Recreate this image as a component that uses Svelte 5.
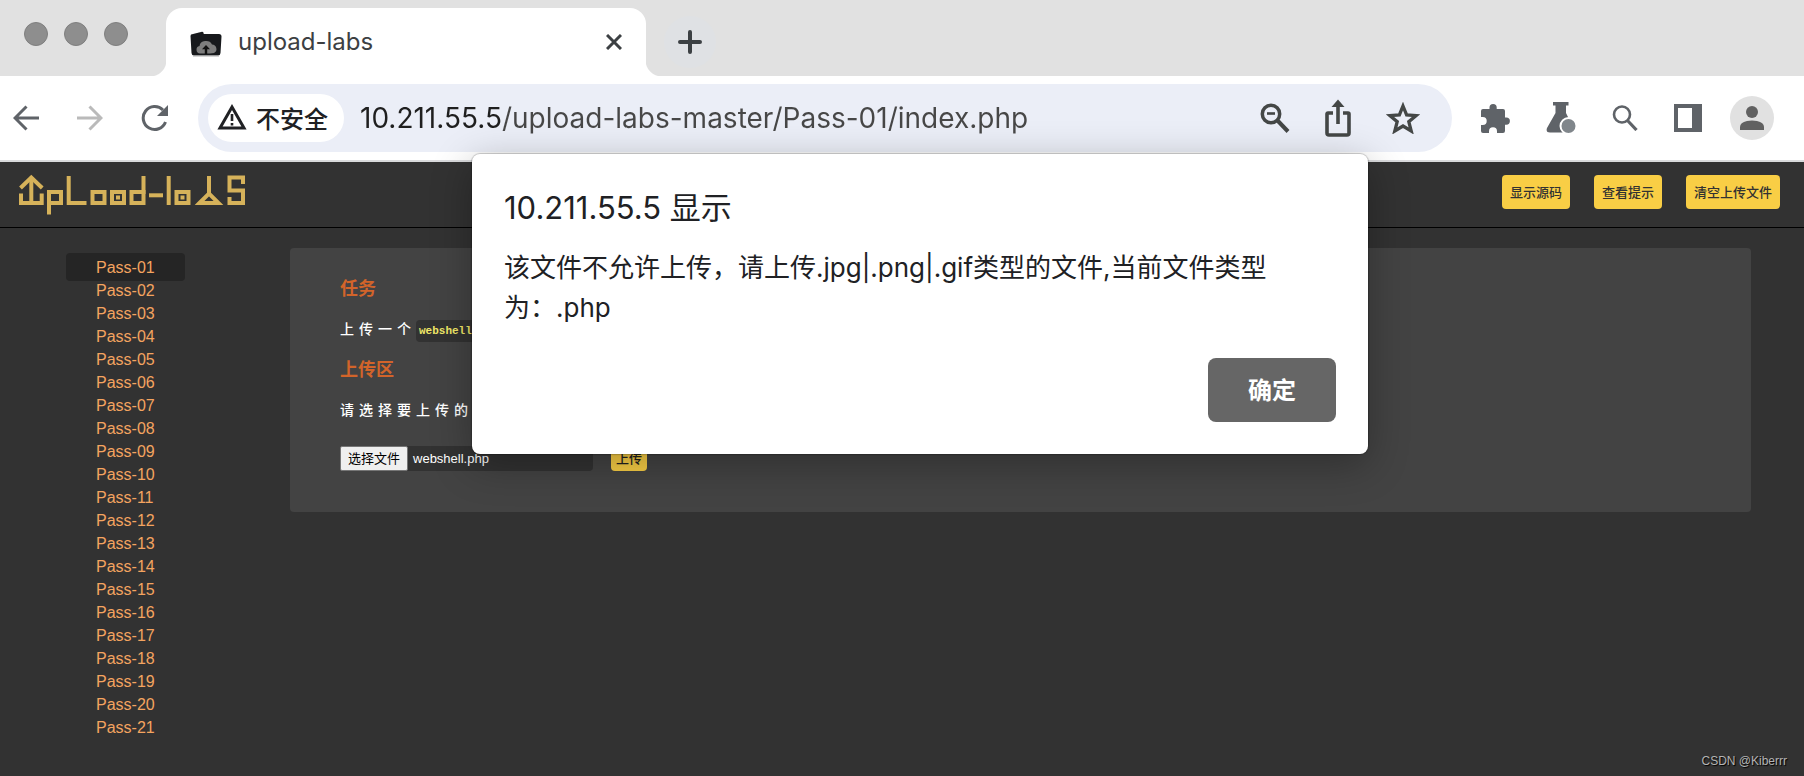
<script lang="ts">
  const host = '10.211.55.5';
  const passes = Array.from({ length: 21 }, (_, i) => `Pass-${String(i + 1).padStart(2, '0')}`);
  const actions = ['显示源码', '查看提示', '清空上传文件'];

  let url = $state(`${host}/upload-labs-master/Pass-01/index.php`);
  let active = $state('Pass-01');
  let fileName = $state('webshell.php');
  let alertOpen = $state(true);

  function pickFile(e: Event) {
    const input = e.target as HTMLInputElement;
    if (input.files?.length) fileName = input.files[0].name;
  }
</script>

<div class="window">
  <div class="tab-strip">
    <div class="lights"><span></span><span></span><span></span></div>
    <div class="tab">
      <svg class="favicon" width="32" height="26" viewBox="0 0 32 26">
        <path d="M1 3.5 12 .8q1.500-.3 1.800 2.200H29q2.500 0 2.500 2.500L30.500 22q-.2 2.500-2.500 2.500H4q-2.300 0-2.500-2.500L.5 5Z" fill="#17191c" />
        <path d="M3 25h26" stroke="#aaa" />
        <path d="M12 22.500H10a3.800 3.800 0 0 1-.5-7.500 6.500 5.500 0 0 1 12.500-1.500 4.500 4.500 0 0 1 2 8.500l-4 .5Z" fill="#7d7d7d" />
        <path d="m16 14 4 4.200h-2.800V23h-2.400v-4.800H12Z" fill="#111" />
      </svg>
      <span class="tab-title">upload-labs</span>
      <button class="icon" aria-label="关闭标签页">
        <svg width="16" height="16" viewBox="0 0 16 16"><path d="m1 1 14 14M15 1 1 15" stroke="#3c4043" stroke-width="3" /></svg>
      </button>
    </div>
    <button class="icon new-tab" aria-label="新标签页">
      <svg width="24" height="24" viewBox="0 0 24 24"><path d="M12 2v20M2 12h20" stroke="#3c4043" stroke-width="4" stroke-linecap="round" /></svg>
    </button>
  </div>

  <div class="toolbar">
    <div class="nav">
      <button class="icon" aria-label="后退">
        <svg width="26" height="26" viewBox="0 0 26 26" fill="none" stroke="#5f6368" stroke-width="3"><path d="M26 13H2M13.500 1.500 2 13l11.500 11.500" /></svg>
      </button>
      <button class="icon" aria-label="前进">
        <svg width="26" height="26" viewBox="0 0 26 26" fill="none" stroke="#bababa" stroke-width="3"><path d="M0 13h24M12.500 1.500 24 13 12.500 24.500" /></svg>
      </button>
      <button class="icon" aria-label="重新加载">
        <svg width="28" height="28" viewBox="0 0 28 28">
          <path d="M24.500 18A11.500 11.500 0 1 1 22 6" fill="none" stroke="#5f6368" stroke-width="3" />
          <path d="M27 1v11H16Z" fill="#5f6368" />
        </svg>
      </button>
    </div>

    <div class="address">
      <button class="chip">
        <svg width="30" height="26" viewBox="0 0 30 26">
          <path d="M15 3 27 24H3Z" fill="none" stroke="#202124" stroke-width="3" />
          <path d="M15 10v7M15 19v2.500" stroke="#202124" stroke-width="2.600" />
        </svg>
        不安全
      </button>
      <input class="url" type="text" aria-label="地址" bind:value={url} />
      <div class="address-icons">
        <button class="icon" aria-label="缩放">
          <svg width="30" height="30" viewBox="0 0 30 30" fill="none" stroke="#444746" stroke-width="3.500">
            <circle cx="11" cy="11" r="8.700" /><path d="m17.500 17.500 10.500 11" stroke-width="4" /><path d="M7 10.500h8" stroke-width="2.600" />
          </svg>
        </button>
        <button class="icon" aria-label="分享">
          <svg width="26" height="38" viewBox="0 0 26 38" fill="none" stroke="#444746" stroke-width="3.600">
            <path d="M8 14H3q-1 0-1 1v19q0 2 2 2h18q2 0 2-2V15q0-1-1-1h-5M13 25V4" /><path d="m13 .5 6.500 7.500h-13Z" fill="#444746" stroke="none" />
          </svg>
        </button>
        <button class="icon" aria-label="收藏">
          <svg width="34" height="32" viewBox="0 0 34 32">
            <path d="m17 4 3.600 8.900 9.600.7-7.400 6.100 2.400 9.300L17 24l-8.200 5 2.400-9.300-7.400-6.100 9.600-.7Z" fill="none" stroke="#444746" stroke-width="3.300" />
          </svg>
        </button>
      </div>
    </div>

    <div class="extensions">
      <button class="icon" aria-label="扩展程序">
        <svg width="30" height="30" viewBox="0 0 30 30">
          <path d="M3 6h6.500V4.500a3.600 3.600 0 0 1 7.200 0V6H23q2 0 2 2v6.500h1.300a3.600 3.600 0 0 1 0 7.200H25V28q0 2-2 2h-6v-1.700a4 4 0 0 0-8 0V30H3q-2 0-2-2v-6h1.700a4 4 0 0 0 0-8H1V8q0-2 2-2Z" fill="#5f6368" />
        </svg>
      </button>
      <button class="icon" aria-label="实验">
        <svg width="30" height="32" viewBox="0 0 30 32">
          <path d="M7 0h15.500v3.500H20V11l7 14q2 5.500-2 5.500H4Q-.5 30.500 1 26l8.500-15V3.500H7Z" fill="#5f6368" />
          <circle cx="22.500" cy="24" r="8" fill="#80868b" stroke="#fff" stroke-width="2" />
        </svg>
      </button>
      <button class="icon" aria-label="搜索">
        <svg width="26" height="26" viewBox="0 0 26 26" fill="none" stroke="#5f6368" stroke-width="2.600">
          <circle cx="10" cy="9.500" r="8" /><path d="m15.500 15.500 9 9.500" stroke-width="3.200" />
        </svg>
      </button>
      <button class="icon" aria-label="侧边栏">
        <svg width="28" height="28" viewBox="0 0 28 28"><path d="M0 0h28v28H0ZM4 4v20h14V4Z" fill="#5f6368" fill-rule="evenodd" /></svg>
      </button>
      <button class="icon avatar" aria-label="用户">
        <svg width="44" height="44" viewBox="0 0 44 44">
          <circle cx="22" cy="22" r="22" fill="#e1e1e1" />
          <circle cx="22" cy="16" r="6" fill="#616161" />
          <path d="M10 34v-3q0-4.500 7-6 5-1 10 0 7 1.500 7 6v3Z" fill="#616161" />
        </svg>
      </button>
    </div>
  </div>

  <div class="page">
    <header>
      <svg class="logo" width="230" height="42" viewBox="0 0 230 42" role="img" aria-label="upload-labs">
        <g fill="none" stroke="#d6b25a" stroke-width="4">
          <polyline points="2.500,14 13.300,3.500 24.200,14" />
          <line x1="13.300" y1="3" x2="13.300" y2="29" />
          <polyline points="3,19.500 3,29 23.700,29 23.700,19.500" />
          <rect x="31" y="18" width="12" height="11" />
          <line x1="31" y1="18" x2="31" y2="40.500" />
          <polyline points="50.700,2 50.700,29 68.500,29" />
          <rect x="74.500" y="18" width="12" height="11" />
          <rect x="94" y="18" width="12" height="11" />
          <rect x="113.500" y="18" width="12" height="11" />
          <line x1="125.500" y1="2" x2="125.500" y2="20" />
          <line x1="131" y1="21.300" x2="145" y2="21.300" />
          <line x1="150.700" y1="2" x2="150.700" y2="31" />
          <rect x="158.500" y="18" width="12" height="11" />
          <line x1="191" y1="2" x2="191" y2="19" />
          <polygon points="181.500,29 191,19.500 200.500,29" />
          <polyline points="225,10 225,3.500 211.500,3.500 211.500,16.500 225,16.500 225,29 211.500,29 211.500,23" />
        </g>
        <g fill="#d6b25a">
          <rect x="98" y="21.500" width="4" height="4" />
          <rect x="162.500" y="21.500" width="4" height="4" />
        </g>
      </svg>
      <div class="actions">
        {#each actions as action}
          <button class="yellow">{action}</button>
        {/each}
      </div>
    </header>

    <div class="content">
      <nav>
        <ul>
          {#each passes as pass}
            <li><a href="#{pass}" class:active={pass === active} onclick={() => (active = pass)}>{pass}</a></li>
          {/each}
        </ul>
      </nav>

      <main>
        <h3>任务</h3>
        <p>上传一个<code>webshell</code></p>
        <h3>上传区</h3>
        <p>请选择要上传的</p>
        <form onsubmit={(e) => e.preventDefault()}>
          <label class="file">
            <input type="file" onchange={pickFile} />
            <span class="choose">选择文件</span>
            <span class="file-name">{fileName}</span>
          </label>
          <button class="yellow upload">上传</button>
        </form>
      </main>
    </div>

    <footer>CSDN @Kiberrr</footer>
  </div>

  {#if alertOpen}
    <div class="alert" role="alertdialog" aria-labelledby="alert-title" aria-describedby="alert-text">
      <h2 id="alert-title">{host} 显示</h2>
      <p id="alert-text">该文件不允许上传，请上传.jpg|.png|.gif类型的文件,当前文件类型为：.php</p>
      <div class="alert-buttons">
        <button onclick={() => (alertOpen = false)}>确定</button>
      </div>
    </div>
  {/if}
</div>

<style>
  :global(body) {
    margin: 0;
    background: #323232;
  }
  .window {
    position: relative;
    display: flex;
    flex-direction: column;
    min-height: 100vh;
    font-family: Inter, 'Noto Sans CJK SC', sans-serif;
  }
  button {
    font-family: inherit;
    border: none;
    cursor: pointer;
  }
  .icon {
    display: flex;
    flex: none;
    padding: 0;
    background: none;
  }

  /* browser chrome */
  .tab-strip {
    display: flex;
    align-items: flex-end;
    height: 76px;
    background: #e1e1e1;
  }
  .lights {
    display: flex;
    gap: 16px;
    align-self: flex-start;
    padding: 22px 38px 0 24px;
  }
  .lights span {
    box-sizing: border-box;
    width: 24px;
    height: 24px;
    border: 1px solid #7f7f7f;
    border-radius: 50%;
    background: #8e8e8e;
  }
  .tab {
    position: relative;
    display: flex;
    align-items: center;
    box-sizing: border-box;
    width: 480px;
    height: 68px;
    padding: 0 24px;
    border-radius: 16px 16px 0 0;
    background: #fff;
  }
  /* inverted corners where the tab meets the toolbar */
  .tab::before,
  .tab::after {
    content: '';
    position: absolute;
    bottom: 0;
    width: 16px;
    height: 16px;
  }
  .tab::before {
    right: 100%;
    background: radial-gradient(circle at 0 0, #e1e1e1 16px, #fff 17px);
  }
  .tab::after {
    left: 100%;
    background: radial-gradient(circle at 100% 0, #e1e1e1 16px, #fff 17px);
  }
  .favicon {
    margin-top: 4px;
  }
  .tab-title {
    flex: 1;
    margin-left: 16px;
    color: #3c4043;
    font-size: 24px;
    line-height: 32px;
  }
  .new-tab {
    align-items: center;
    justify-content: center;
    width: 52px;
    height: 52px;
    margin: 0 0 8px 18px;
    border-radius: 50%;
    background: #dfe1e4;
  }
  .toolbar {
    display: flex;
    align-items: center;
    padding: 8px 30px 8px 13px;
    border-bottom: 2px solid #d9dadc;
    background: #fff;
  }
  .nav {
    display: flex;
    align-items: center;
    gap: 38px;
    margin-right: 29px;
  }
  .address {
    display: flex;
    flex: 1;
    align-items: center;
    box-sizing: border-box;
    min-width: 0;
    height: 68px;
    padding: 0 32px 0 10px;
    border-radius: 34px;
    background: #ebeef7;
  }
  .chip {
    display: flex;
    align-items: center;
    gap: 9px;
    box-sizing: border-box;
    height: 48px;
    padding: 0 16px 2px 9px;
    border-radius: 24px;
    background: #fff;
    color: #202124;
    font-size: 24px;
    font-weight: 500;
    white-space: nowrap;
  }
  .url {
    flex: 1;
    min-width: 0;
    margin-left: 16px;
    padding: 0;
    border: none;
    outline: none;
    /* host darker than the path */
    background: linear-gradient(90deg, #1f1f1f 142px, #474747 142px);
    background-clip: text;
    color: transparent;
    caret-color: #1f1f1f;
    font: 28px/36px Inter, sans-serif;
  }
  .address-icons {
    display: flex;
    align-items: center;
    gap: 35px;
  }
  .extensions {
    display: flex;
    align-items: center;
    gap: 36px;
    margin-left: 28px;
  }
  .avatar {
    margin-left: -8px;
  }

  /* page */
  .page {
    display: flex;
    flex: 1;
    flex-direction: column;
    background: #323232;
  }
  header {
    display: flex;
    justify-content: space-between;
    padding: 12px 24px 18px 18px;
    border-bottom: 1px solid #000;
  }
  .actions {
    display: flex;
    gap: 24px;
    padding-top: 1px;
  }
  .yellow {
    box-sizing: border-box;
    height: 34px;
    padding: 0 8px 2px;
    border-radius: 4px;
    background: #f9ce45;
    color: #323232;
    font-size: 13px;
    font-weight: 500;
  }
  .logo {
    margin-bottom: -7px;
  }
  .content {
    display: flex;
    align-items: flex-start;
    padding: 20px 53px 0 0;
  }
  nav {
    flex: none;
    width: 290px;
  }
  ul {
    margin: 0;
    padding: 8px 0 0 66px;
    list-style: none;
  }
  li {
    font: 16px/23px 'Liberation Sans', Arial, sans-serif;
  }
  li a {
    padding: 6px 30px 5px;
    border-radius: 4px;
    color: #f4a460;
    text-decoration: none;
  }
  li a.active {
    background: #252525;
  }
  main {
    flex: 1;
    min-width: 0;
    padding: 29px 50px 41px;
    border-radius: 4px;
    background: #434343;
  }
  main h3 {
    margin: 0 0 16px;
    color: #d2642a;
    font-size: 18px;
    line-height: 24px;
  }
  main p {
    margin: 0 0 17px;
    color: #fff;
    font-size: 14px;
    font-weight: 500;
    line-height: 24px;
    letter-spacing: 5px;
  }
  code {
    padding: 5px 3px;
    border-radius: 4px;
    background: #323232;
    color: #f0e868;
    font: bold 11px 'Liberation Mono', monospace;
    letter-spacing: 0;
  }
  form {
    display: flex;
    align-items: center;
    gap: 18px;
    padding-top: 6px;
  }
  .file {
    display: flex;
    align-items: center;
    width: 253px;
    border-radius: 4px;
    background: #323232;
    cursor: pointer;
  }
  .file input {
    position: absolute;
    width: 1px;
    height: 1px;
    opacity: 0;
  }
  .choose {
    padding: 0 7px 1px;
    border: 1px solid #767676;
    border-radius: 2px;
    background: #efefef;
    color: #000;
    font-size: 13px;
    line-height: 22px;
  }
  .file-name {
    margin-left: 5px;
    color: #fff;
    font: 13px 'Liberation Sans', Arial, sans-serif;
  }
  .upload {
    height: 26px;
    padding: 0 5px 1px;
    color: #222;
  }
  footer {
    margin-top: auto;
    padding: 0 17px 7px;
    color: #b4b4b4;
    font: 12px/16px 'Liberation Sans', Arial, sans-serif;
    text-align: right;
    text-shadow: 1px 1px 1px #000;
  }

  /* javascript alert, hangs over the bottom of the toolbar */
  .alert {
    position: absolute;
    top: 154px;
    left: 472px;
    box-sizing: border-box;
    width: 896px;
    padding: 32px;
    border-radius: 8px;
    background: #fff;
    box-shadow: 0 0 1px 1px rgba(0, 0, 0, 0.2), 0 10px 40px rgba(0, 0, 0, 0.3);
    color: #202124;
  }
  .alert h2 {
    margin: 0 0 18px;
    font-size: 31px;
    font-weight: 400;
    line-height: 44px;
  }
  .alert p {
    margin: 0 0 30px;
    padding-right: 60px;
    font-size: 26px;
    line-height: 40px;
  }
  .alert-buttons {
    display: flex;
    justify-content: flex-end;
  }
  .alert-buttons button {
    height: 64px;
    padding: 0 40px 4px;
    border-radius: 8px;
    background: #666;
    color: #fff;
    font-size: 24px;
    font-weight: 700;
  }
</style>
